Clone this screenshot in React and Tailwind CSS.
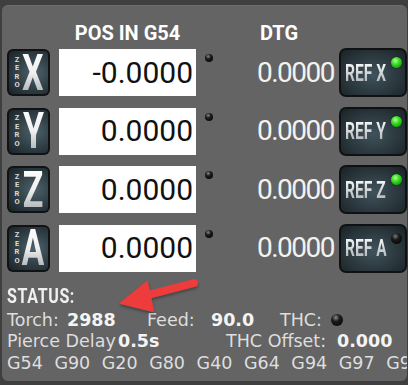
const rows = [
  { axis: "X", pos: "-0.0000", dtg: "0.0000", led: true },
  { axis: "Y", pos: "0.0000", dtg: "0.0000", led: true },
  { axis: "Z", pos: "0.0000", dtg: "0.0000", led: true },
  { axis: "A", pos: "0.0000", dtg: "0.0000", led: false },
];

function ZeroButton({ axis }) {
  return (
    <div className="w-[43px] h-[47px] rounded-[6px] bg-[#101213] p-[2px] shrink-0">
      <div className="relative w-full h-full rounded-[4px] bg-[radial-gradient(ellipse_at_65%_50%,#4d626b_0%,#34444b_45%,#1a2327_100%)] flex items-center">
        <div className="flex flex-col items-center w-[8px] ml-[4px] text-[7.5px] leading-[8.5px] font-bold text-[#d8dcdd] font-['Roboto',sans-serif]">
          <span>Z</span>
          <span>E</span>
          <span>R</span>
          <span>O</span>
        </div>
        <div className="w-[24px] flex justify-center">
          <span className="inline-block scale-x-[0.68] text-[50px] leading-none font-bold font-['Roboto',sans-serif] bg-gradient-to-b from-white via-[#f0f0f0] to-[#9da4a7] bg-clip-text text-transparent">
            {axis}
          </span>
        </div>
      </div>
    </div>
  );
}

function RefButton({ axis, led }) {
  return (
    <div className="relative w-[68px] h-[49px] rounded-[7px] bg-[#0f1112] p-[2px] shrink-0">
      <div className="w-full h-full rounded-[5px] bg-[radial-gradient(ellipse_at_50%_55%,#40535b_0%,#2d3b41_50%,#1a2226_100%)] flex items-center pl-[4px]">
        <span className="inline-block origin-left scale-x-[0.65] whitespace-nowrap text-[24px] leading-none font-bold font-['Roboto',sans-serif] bg-gradient-to-b from-white to-[#a9afb2] bg-clip-text text-transparent">
          REF {axis}
        </span>
      </div>
      {led ? (
        <div className="absolute top-[9px] right-[5px] w-[11px] h-[11px] rounded-full bg-[radial-gradient(circle_at_40%_35%,#b6ff9a_0%,#3fe02a_35%,#109a08_80%,#0b5a06_100%)] shadow-[0_0_1px_#000]" />
      ) : (
        <div className="absolute top-[9px] right-[5px] w-[11px] h-[11px] rounded-full bg-[radial-gradient(circle_at_40%_30%,#7a7a7a_0%,#1a1a1a_35%,#000_100%)]" />
      )}
    </div>
  );
}

function Dot({ className }) {
  return (
    <div
      className={
        "rounded-full bg-[radial-gradient(circle_at_40%_30%,#8a8a8a_0%,#1c1c1c_35%,#000_100%)] " +
        className
      }
    />
  );
}

export default function App() {
  return (
    <div className="relative w-[408px] h-[385px] bg-[#3f3f3f] pt-[5px] pl-[2px] pr-[1px] pb-[4px] overflow-hidden">
      <div className="h-full rounded-[6px] bg-[#646464] border-t border-[#6e6e6e] overflow-hidden pt-[15px]">
        {/* header */}
        <div className="flex h-[24px] items-center text-[20px] leading-[24px] font-bold text-white font-['Roboto',sans-serif]">
          <div className="ml-[57px] w-[137px] text-center">POS IN G54</div>
          <div className="ml-[64px]">DTG</div>
        </div>

        {/* axis rows */}
        <div className="mt-[3px] flex flex-col gap-[9.5px]">
          {rows.map((r) => (
            <div key={r.axis} className="flex items-center h-[49px] pl-[5px]">
              <ZeroButton axis={r.axis} />
              <div className="ml-[9px] w-[137px] h-[47px] bg-white flex items-center justify-end pr-[3px] text-[30px] leading-none text-[#111] font-['Roboto',sans-serif]">
                {r.pos}
              </div>
              <Dot className="self-start mt-[6px] ml-[9px] w-[8px] h-[8px] shrink-0" />
              <div className="flex-1 text-right pr-[5px] text-[28px] leading-none tracking-[-1.5px] text-[#f2f2f2] font-['Roboto',sans-serif]">
                {r.dtg}
              </div>
              <RefButton axis={r.axis} led={r.led} />
            </div>
          ))}
        </div>

        {/* status */}
        <div className="mt-[12px] pl-[5px]">
          <div className="h-[22px] leading-[22px] text-[20px] font-bold text-[#f0f0f0] font-['Roboto',sans-serif]">
            <span className="inline-block origin-left scale-x-[0.8] tracking-[0.8px]">STATUS:</span>
          </div>
          <div className="mt-[3px] text-[17.5px] leading-[21.5px] text-[#dedede] whitespace-nowrap font-['DejaVu_Sans',sans-serif]">
            <div className="flex items-center">
              <span className="w-[60px] shrink-0">Torch:</span>
              <span className="w-[80px] shrink-0 font-bold text-[#f4f4f4]">2988</span>
              <span className="w-[64px] shrink-0">Feed:</span>
              <span className="w-[69px] shrink-0 font-bold text-[#f4f4f4]">90.0</span>
              <span className="w-[51px] shrink-0">THC:</span>
              <Dot className="w-[12px] h-[12px] shrink-0" />
            </div>
            <div className="flex items-center">
              <span className="w-[111px] shrink-0">Pierce Delay</span>
              <span className="w-[108px] shrink-0 font-bold text-[#f4f4f4]">0.5s</span>
              <span className="w-[111px] shrink-0">THC Offset:</span>
              <span className="shrink-0 font-bold text-[#f4f4f4]">0.000</span>
            </div>
            <div className="[word-spacing:6px]">G54 G90 G20 G80 G40 G64 G94 G97 G99</div>
          </div>
        </div>
      </div>

      {/* red annotation arrow */}
      <svg
        className="absolute left-0 top-0 pointer-events-none"
        width="408"
        height="385"
        viewBox="0 0 408 385"
      >
        <defs>
          <filter id="sh" x="-20%" y="-50%" width="140%" height="200%">
            <feDropShadow dx="0" dy="2" stdDeviation="1.5" floodColor="#000" floodOpacity="0.35" />
          </filter>
        </defs>
        <g filter="url(#sh)" fill="#ee3b3b" stroke="#ee3b3b">
          <line x1="194" y1="283" x2="144" y2="296" strokeWidth="8" strokeLinecap="round" />
          <polygon points="121,303 147,282 153,311" strokeWidth="2" strokeLinejoin="round" />
        </g>
      </svg>
    </div>
  );
}
